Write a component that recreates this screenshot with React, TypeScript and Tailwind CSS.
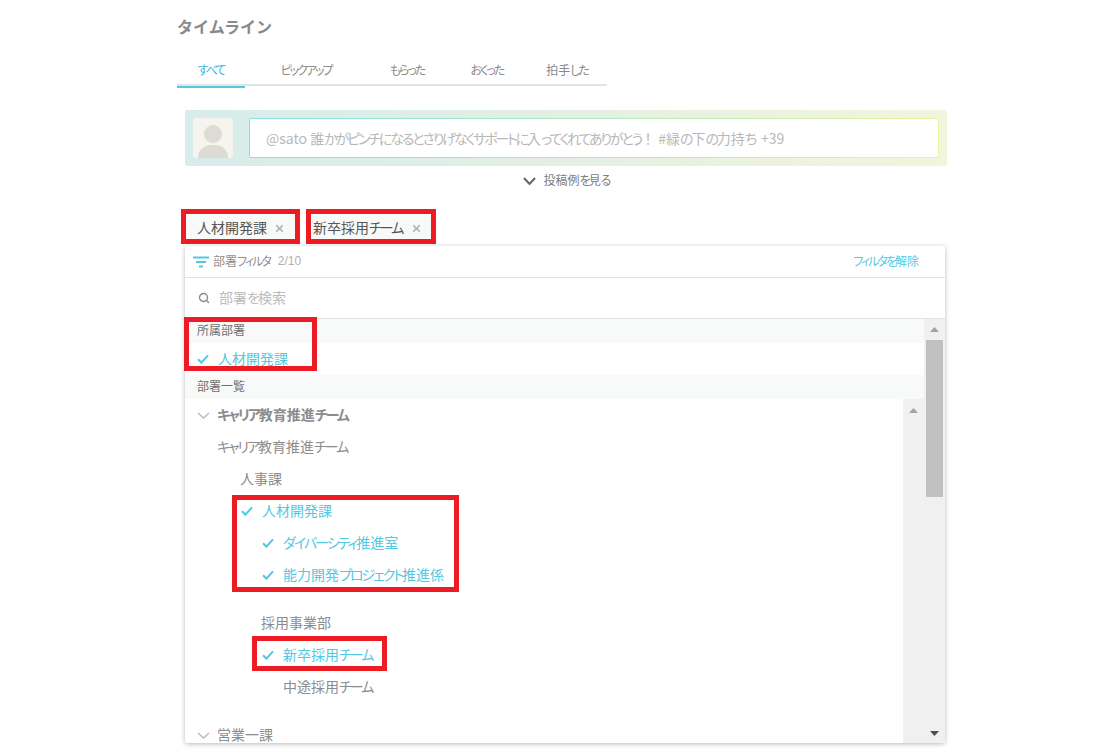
import React from "react";
import { Search, X } from "lucide-react";

const font = "[font-family:'Noto_Sans_CJK_JP','Liberation_Sans',sans-serif]";

function T({ children, tight }: { children: string; tight?: boolean }) {
  const parts = children.split(/([ぁ-ゟ゠-ヿ]+)/);
  return (
    <>
      {parts.map((p, i) =>
        i % 2 === 1 ? (
          <span key={i} className={tight ? "tracking-[-2.15px]" : "tracking-[-2px]"}>{p}</span>
        ) : (
          <React.Fragment key={i}>{p}</React.Fragment>
        )
      )}
    </>
  );
}

function Chev({ className, w = 13, h = 7, sw = 1.6 }: { className: string; w?: number; h?: number; sw?: number }) {
  return (
    <svg width={w} height={h} viewBox={`0 0 ${w} ${h}`} fill="none" stroke="currentColor" strokeWidth={sw} className={className}>
      <path d={`M1 1 ${w / 2} ${h - 1} ${w - 1} 1`} />
    </svg>
  );
}

function Tick() {
  return (
    <svg width="12" height="10" viewBox="0 0 12 10" fill="none" stroke="#52c9e2" strokeWidth="2.1" className="mr-[9px] shrink-0">
      <path d="M1 5.2 4.4 8.6 11 1.4" />
    </svg>
  );
}

function Tab({ label, active, w }: { label: string; active?: boolean; w: string }) {
  return (
    <div className={`${w} h-[34px] -mb-[2px] flex items-center justify-center text-[12px] border-b-2 ${active ? "border-[#52cbe0] text-[#3fb4d8]" : "border-transparent text-[#8a8a8a]"}`}>
      <T>{label}</T>
    </div>
  );
}

function Row({ label, indent, checked, bold, chevron }: { label: string; indent: string; checked?: boolean; bold?: boolean; chevron?: boolean }) {
  return (
    <div className={`h-8 ${indent} flex items-center text-[14px] shrink-0 ${checked ? "text-[#52c9e2]" : "text-[#8c8c8c]"} ${bold ? "font-bold" : ""}`}>
      {checked && <Tick />}
      {chevron && <Chev className="mr-[7px] text-[#bdbdbd] shrink-0" />}
      <span className="whitespace-nowrap -translate-y-px"><T>{label}</T></span>
    </div>
  );
}

function Arrow({ up, dark }: { up?: boolean; dark?: boolean }) {
  return (
    <svg width="9" height="5" viewBox="0 0 9 5" className={dark ? "fill-[#505050]" : "fill-[#a3a3a3]"}>
      <path d={up ? "M4.5 0 9 5H0Z" : "M0 0H9L4.5 5Z"} />
    </svg>
  );
}

function Mark({ className }: { className: string }) {
  return <div className={`absolute border-[5px] border-[#ed1c24] pointer-events-none ${className}`} />;
}

export default function App() {
  return (
    <div className={`relative w-[1103px] h-[749px] overflow-hidden bg-white ${font} [font-feature-settings:'palt']`}>
      <div className="ml-[177px] w-[770px]">
        <h1 className="h-[54px] pt-[15px] text-[16px] leading-[22px] font-bold text-[#8a8a8a] [font-feature-settings:normal]">タイムライン</h1>
        <div className="flex w-[430px] h-[32px] border-b-2 border-[#e1e4e5]">
          <Tab label="すべて" active w="w-[68px]" />
          <Tab label="ピックアップ" w="w-[122px]" />
          <Tab label="もらった" w="w-[80px]" />
          <Tab label="おくった" w="w-[80px]" />
          <Tab label="拍手した" w="w-[80px]" />
        </div>

        <div className="ml-[8px] mt-[24px] w-[762px] h-[56px] rounded-[2px] bg-gradient-to-r from-[#d7ecec] via-[#e3f0e2] to-[#f2f5dd] p-[8px] flex gap-[16px]">
          <div className="w-[40px] h-[40px] rounded-[2px] bg-[#f5f5ee] overflow-hidden flex-none">
            <svg viewBox="0 0 40 40" className="w-full h-full fill-[#dcdcd4]">
              <circle cx="20" cy="16" r="9" />
              <path d="M5 40c0-9 6-13 15-13s15 4 15 13Z" />
            </svg>
          </div>
          <div className="flex-1 rounded-[2px] p-px bg-gradient-to-r from-[#8cdde0] via-[#b0e8c0] to-[#e8f2a0]">
            <div className="h-full bg-white rounded-[1px] pl-[16px] flex items-center text-[14px] text-[#b8b8b8] whitespace-nowrap">
              <span className="whitespace-pre">
                <T tight>@sato 誰かがピンチになるとさりげなくサポートに入ってくれてありがとう</T>
                <span className="[font-feature-settings:normal]">！</span>
                <T tight> #緑の下の力持ち</T>
                <span className="ml-[3px]"> +39</span>
              </span>
            </div>
          </div>
        </div>

        <div className="ml-[8px] w-[762px] h-[30px] flex items-center justify-center text-[12px] text-[#7d7d7d]">
          <Chev w={13} h={8} sw={2} className="mr-[8px] text-[#666]" />
          <span className="-translate-y-px"><T>投稿例を見る</T></span>
        </div>

        <div className="ml-[8px] mt-[14px] h-[36px] flex text-[14px] text-[#555]">
          <div className="w-[110px] h-[26px] mt-[5px] bg-[#f8f9f9] pl-[12px] flex items-center">
            <span className="-translate-y-px">人材開発課</span>
            <X size={11} strokeWidth={3.6} className="ml-[7px] text-[#b0b0b0]" />
          </div>
          <div className="w-[120px] h-[26px] mt-[5px] ml-[17px] bg-[#f8f9f9] pl-px flex items-center">
            <span className="-translate-y-px"><T>新卒採用チーム</T></span>
            <X size={11} strokeWidth={3.6} className="ml-[9px] text-[#b0b0b0]" />
          </div>
        </div>

        <div className="ml-[8px] w-[760px] h-[497px] bg-white rounded-[2px] shadow-[0_1px_5px_rgba(0,0,0,0.28)] flex flex-col overflow-hidden">
          <div className="h-[32px] flex-none border-b border-[#e2e2e2] flex items-center pl-[8px] pr-[26px] text-[12px] text-[#8f8f8f]">
            <svg width="16" height="12" viewBox="0 0 16 12" className="mr-[4px] stroke-[#52c9e2]" strokeWidth="2" fill="none">
              <path d="M0 1.5h16M3 6h10M6 10.5h4" />
            </svg>
            <span className="-translate-y-px"><T>部署フィルタ</T></span>
            <span className="ml-[8px] -translate-y-px text-[#b0b0b0] [font-family:'Liberation_Sans',sans-serif]">2/10</span>
            <span className="ml-auto -translate-y-px text-[#58c9e4]"><T>フィルタを解除</T></span>
          </div>
          <div className="h-[41px] flex-none border-b border-[#e2e2e2] flex items-center pl-[13px] text-[14px] text-[#bcbcbc]">
            <Search size={12} strokeWidth={2.8} className="mr-[9px] text-[#8a8a8a]" />
            <span className="-translate-y-px"><T>部署を検索</T></span>
          </div>
          <div className="flex-1 min-h-0 flex">
            <div className="flex-1 min-w-0 flex flex-col">
              <div className="h-[24px] flex-none bg-[#f8fafa] pl-[12px] flex items-center text-[12px] text-[#6f6f6f]"><span className="-translate-y-px">所属部署</span></div>
              <Row label="人材開発課" indent="pl-[12px]" checked />
              <div className="h-[24px] flex-none bg-[#f8fafa] pl-[12px] flex items-center text-[12px] text-[#6f6f6f]"><span className="-translate-y-px">部署一覧</span></div>
              <div className="flex-1 min-h-0 flex">
                <div className="flex-1 min-w-0 flex flex-col overflow-hidden">
                  <Row label="キャリア教育推進チーム" indent="pl-[12px]" bold chevron />
                  <Row label="キャリア教育推進チーム" indent="pl-[32px]" />
                  <Row label="人事課" indent="pl-[55px]" />
                  <Row label="人材開発課" indent="pl-[56px]" checked />
                  <Row label="ダイバーシティ推進室" indent="pl-[77px]" checked />
                  <Row label="能力開発プロジェクト推進係" indent="pl-[77px]" checked />
                  <div className="h-[16px] flex-none" />
                  <Row label="採用事業部" indent="pl-[76px]" />
                  <Row label="新卒採用チーム" indent="pl-[77px]" checked />
                  <Row label="中途採用チーム" indent="pl-[98px]" />
                  <div className="h-[16px] flex-none" />
                  <Row label="営業一課" indent="pl-[12px]" chevron />
                </div>
                <div className="w-[21px] flex-none bg-[#f0f0f0] flex justify-center pt-[9px]">
                  <Arrow up />
                </div>
              </div>
            </div>
            <div className="w-[21px] flex-none bg-[#f0f0f0] flex flex-col items-center">
              <div className="h-[21px] flex items-center justify-center flex-none"><Arrow up /></div>
              <div className="w-[17px] h-[157px] bg-[#c0c0c0] flex-none" />
              <div className="mt-auto h-[20px] flex items-center justify-center flex-none"><Arrow dark /></div>
            </div>
          </div>
        </div>
      </div>

      <Mark className="left-[181px] top-[209px] w-[119px] h-[35px]" />
      <Mark className="left-[306px] top-[209px] w-[130px] h-[35px]" />
      <Mark className="left-[184px] top-[317px] w-[133px] h-[54px]" />
      <Mark className="left-[232px] top-[495px] w-[227px] h-[97px]" />
      <Mark className="left-[252px] top-[636px] w-[135px] h-[35px]" />
    </div>
  );
}
